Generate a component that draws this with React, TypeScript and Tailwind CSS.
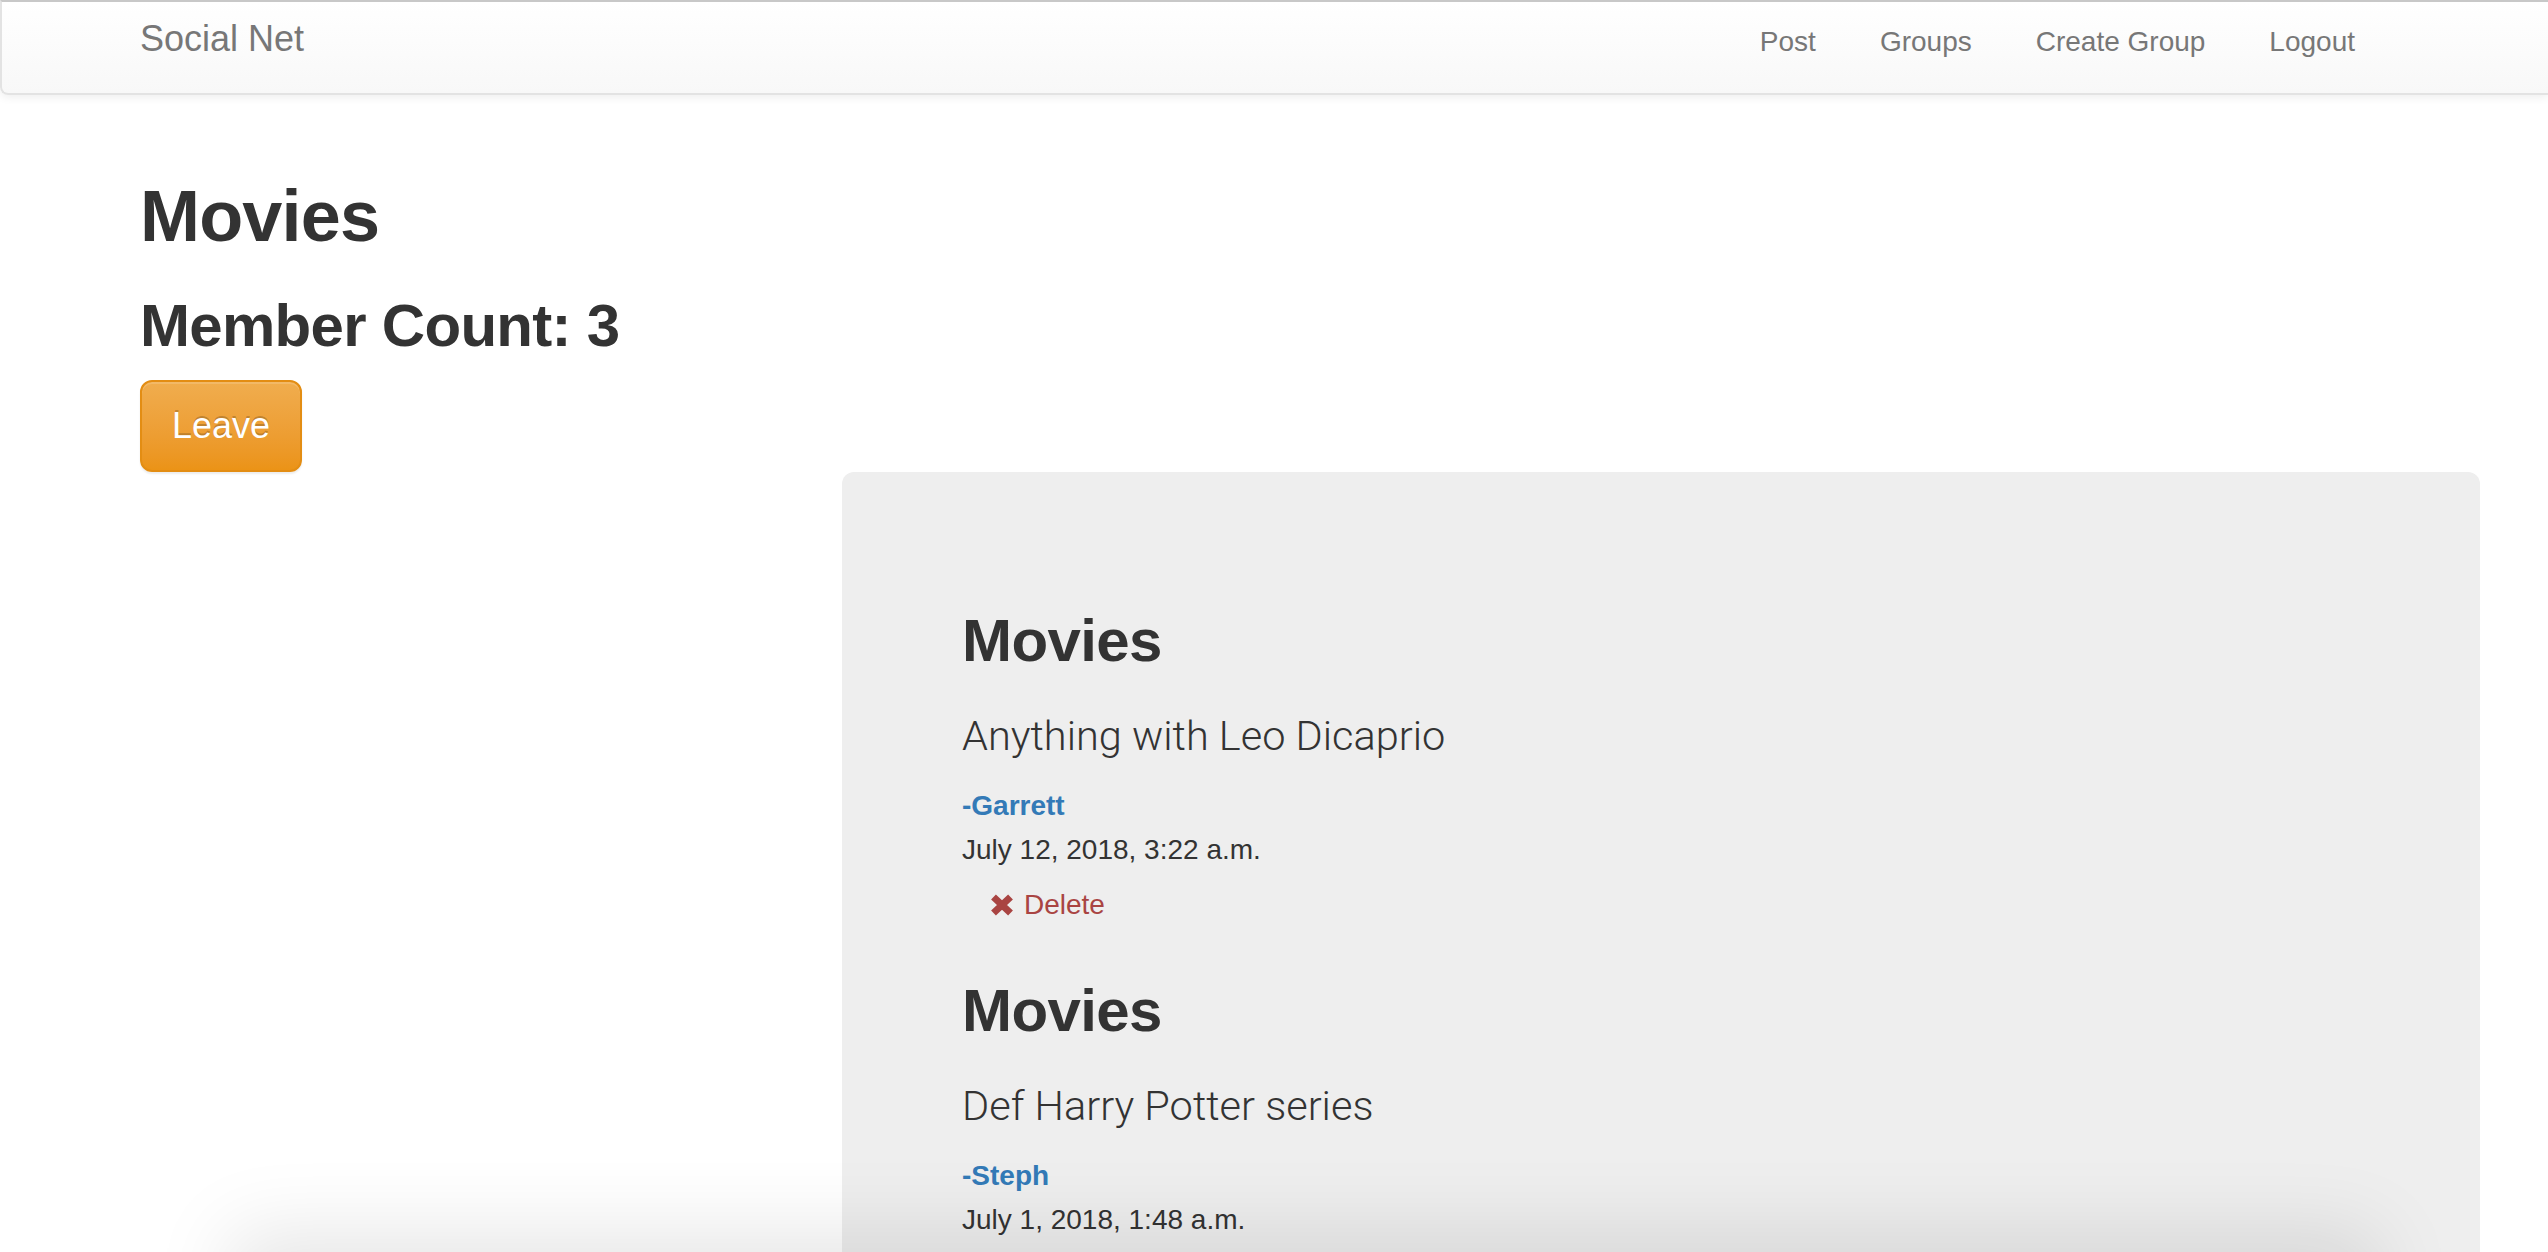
const posts = [
  {
    group: "Movies",
    body: "Anything with Leo Dicaprio",
    author: "Garrett",
    date: "July 12, 2018, 3:22 a.m.",
    mine: true,
  },
  {
    group: "Movies",
    body: "Def Harry Potter series",
    author: "Steph",
    date: "July 1, 2018, 1:48 a.m.",
    mine: false,
  },
];

const navLinks = ["Post", "Groups", "Create Group", "Logout"];

const RemoveIcon = () => (
  <svg width="24" height="22" viewBox="0 0 24 22" className="shrink-0">
    <path
      d="M3.5 3 L20.5 19 M20.5 3 L3.5 19"
      stroke="#a94442"
      strokeWidth="7"
      strokeLinecap="butt"
      fill="none"
    />
  </svg>
);

export default function App() {
  return (
    <div className="relative h-[1252px] overflow-hidden bg-white font-['Liberation_Sans',Arial,sans-serif] text-[#333]">
      {/* navbar */}
      <nav className="flex h-[95px] items-baseline rounded-bl-[8px] border-t-2 border-b-2 border-l-2 border-r-0 border-t-[#c8c8c8] border-b-[#e3e3e3] border-l-[#e3e3e3] bg-gradient-to-b from-white to-[#f8f8f8] pt-[17px] pl-[138px] pr-[161px] shadow-[0_2px_10px_rgba(0,0,0,0.075)]">
        <a className="text-[36px] leading-[40px] text-[#777]">Social Net</a>
        <ul className="ml-auto flex items-baseline">
          {navLinks.map((link) => (
            <li key={link} className="px-[32px] text-[28px] leading-[40px] text-[#777]">
              {link}
            </li>
          ))}
        </ul>
      </nav>

      <main className="pl-[140px]">
        <h1 className="mt-[82px] text-[72px] leading-[79px] font-bold tracking-[-0.8px]">
          Movies
        </h1>
        <h2 className="mt-[37px] text-[60px] leading-[66px] font-bold tracking-[-0.7px]">
          Member Count: 3
        </h2>
        <button className="mt-[21px] block rounded-[12px] border-2 border-[#e38d13] bg-gradient-to-b from-[#f0ad4e] to-[#eb9316] px-[30px] py-[20px] text-[36px] leading-[48px] text-white shadow-[inset_0_2px_0_rgba(255,255,255,0.15),0_2px_2px_rgba(0,0,0,0.075)] [text-shadow:0_-2px_0_rgba(0,0,0,0.2)]">
          Leave
        </button>

        <section className="ml-[702px] w-[1638px] rounded-[12px] bg-[#eee] pt-[136px] pl-[120px] pb-[100px]">
          {posts.map((post, i) => (
            <div key={i} className={i === 0 ? "" : "mt-[53px]"}>
              <h2 className="text-[60px] leading-[66px] font-bold tracking-[-0.6px]">
                {post.group}
              </h2>
              <p className="mt-[32px] font-['Roboto','Liberation_Sans',sans-serif] text-[41.5px] leading-[60px] font-light">
                {post.body}
              </p>
              <div className="mt-[20px] text-[28px] leading-[40px] font-bold text-[#337ab7]">
                -{post.author}
              </div>
              <div className="mt-[4px] text-[28px] leading-[40px]">{post.date}</div>
              {post.mine && (
                <div className="mt-[15px] flex items-center gap-[10px] pl-[28px] text-[28px] leading-[40px] text-[#a94442]">
                  <RemoveIcon />
                  <span>Delete</span>
                </div>
              )}
            </div>
          ))}
        </section>
      </main>

      {/* soft shadow rising from below the window edge */}
      <div className="fixed left-[260px] right-[200px] top-[1262px] h-[60px] shadow-[0_0_80px_30px_rgba(0,0,0,0.10)]" />
    </div>
  );
}
